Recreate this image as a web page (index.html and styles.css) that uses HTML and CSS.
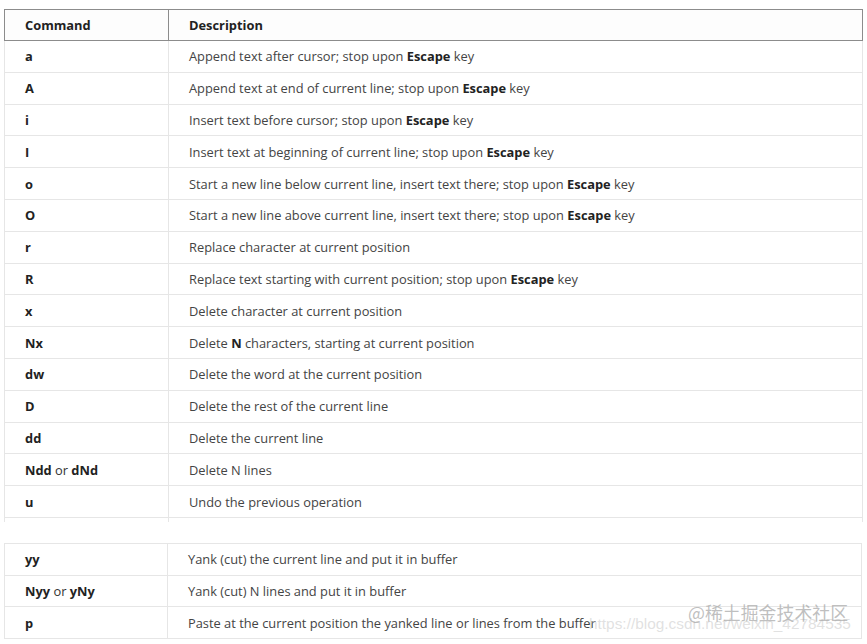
FILE: index.html
```html
<!DOCTYPE html>
<html>
<head>
<meta charset="utf-8">
<link rel="stylesheet" href="styles.css">
</head>
<body>
<div class="page">
  <table class="cmd cmd-main">
    <thead>
      <tr><th class="c1">Command</th><th class="c2">Description</th></tr>
    </thead>
    <tbody>
      <tr><td class="c1"><b>a</b></td><td class="c2">Append text after cursor; stop upon <b>Escape</b> key</td></tr>
      <tr><td class="c1"><b>A</b></td><td class="c2">Append text at end of current line; stop upon <b>Escape</b> key</td></tr>
      <tr><td class="c1"><b>i</b></td><td class="c2">Insert text before cursor; stop upon <b>Escape</b> key</td></tr>
      <tr><td class="c1"><b>I</b></td><td class="c2">Insert text at beginning of current line; stop upon <b>Escape</b> key</td></tr>
      <tr><td class="c1"><b>o</b></td><td class="c2">Start a new line below current line, insert text there; stop upon <b>Escape</b> key</td></tr>
      <tr><td class="c1"><b>O</b></td><td class="c2">Start a new line above current line, insert text there; stop upon <b>Escape</b> key</td></tr>
      <tr><td class="c1"><b>r</b></td><td class="c2">Replace character at current position</td></tr>
      <tr><td class="c1"><b>R</b></td><td class="c2">Replace text starting with current position; stop upon <b>Escape</b> key</td></tr>
      <tr><td class="c1"><b>x</b></td><td class="c2">Delete character at current position</td></tr>
      <tr><td class="c1"><b>Nx</b></td><td class="c2">Delete <b>N</b> characters, starting at current position</td></tr>
      <tr><td class="c1"><b>dw</b></td><td class="c2">Delete the word at the current position</td></tr>
      <tr><td class="c1"><b>D</b></td><td class="c2">Delete the rest of the current line</td></tr>
      <tr><td class="c1"><b>dd</b></td><td class="c2">Delete the current line</td></tr>
      <tr><td class="c1"><b>Ndd</b> or <b>dNd</b></td><td class="c2">Delete N lines</td></tr>
      <tr><td class="c1"><b>u</b></td><td class="c2">Undo the previous operation</td></tr>
      <tr class="tail"><td class="c1"></td><td class="c2"></td></tr>
    </tbody>
  </table>

  <table class="cmd cmd-second">
    <tbody>
      <tr><td class="c1"><b>yy</b></td><td class="c2">Yank (cut) the current line and put it in buffer</td></tr>
      <tr><td class="c1"><b>Nyy</b> or <b>yNy</b></td><td class="c2">Yank (cut) N lines and put it in buffer</td></tr>
      <tr><td class="c1"><b>p</b></td><td class="c2">Paste at the current position the yanked line or lines from the buffer</td></tr>
    </tbody>
  </table>

  <div class="wm-url">https://blog.csdn.net/weixin_42784535</div>
  <div class="wm-brand">@稀土掘金技术社区</div>
</div>
</body>
</html>
```

FILE: styles.css
```css
html, body {
  margin: 0;
  padding: 0;
  background: #ffffff;
}

.page {
  position: relative;
  width: 867px;
  height: 644px;
  overflow: hidden;
  font-family: "Open Sans", "Noto Sans", sans-serif;
  font-size: 12.85px;
  color: #444444;
}

.cmd {
  border-collapse: collapse;
  table-layout: fixed;
}

.cmd-main {
  margin: 9px 0 0 4px;
  width: 859px;
}

.cmd-second {
  margin: 21px 0 0 4px;
  width: 858px;
}

.cmd th,
.cmd td {
  text-align: left;
  vertical-align: middle;
  padding: 0 0 0 20px;
  white-space: nowrap;
}

.cmd b {
  color: #222222;
  font-weight: 700;
}

.cmd-main th {
  height: 30px;
  border: 1px solid #8c8c8c;
  font-weight: 700;
  color: #222222;
  background: #fdfdfd;
}

.cmd-main .c1 { width: 143px; }
.cmd-second .c1 { width: 142px; }

.cmd td {
  height: 30.8px;
  border: 1px solid #e6e6e6;
  border-top: none;
}

.cmd td.c1 { color: #333333; }

.cmd-main tr.tail td {
  height: 4px;
  border-bottom: none;
  padding: 0;
}

.cmd-second tr:first-child td {
  border-top: 1px solid #e6e6e6;
}

.cmd-second td {
  height: 30.7px;
}

.wm-url {
  position: absolute;
  left: 589px;
  top: 615px;
  font-family: "Liberation Sans", Arial, sans-serif;
  font-size: 15.4px;
  color: rgba(200, 200, 200, 0.55);
  white-space: nowrap;
}

.wm-brand {
  position: absolute;
  left: 688px;
  top: 599px;
  font-family: "Noto Sans CJK SC", "Noto Sans", sans-serif;
  font-size: 17.9px;
  color: rgba(170, 170, 170, 0.75);
  white-space: nowrap;
}
```
